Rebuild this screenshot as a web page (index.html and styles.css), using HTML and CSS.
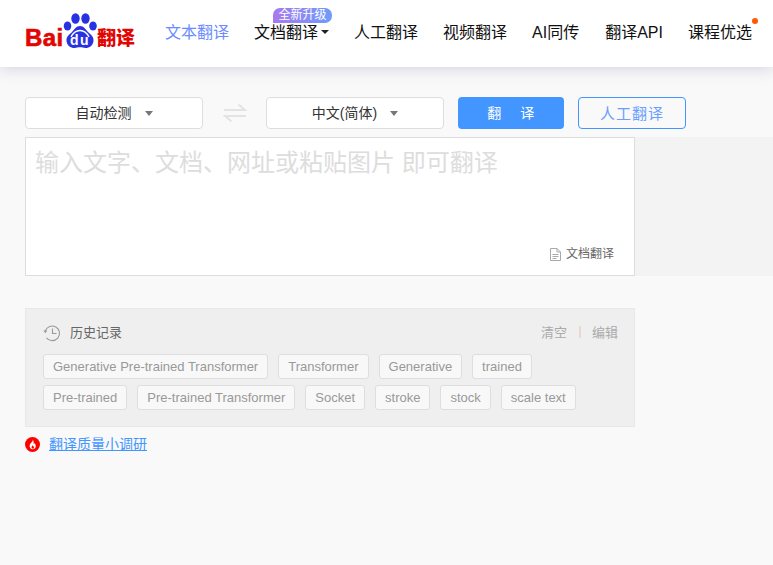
FILE: index.html
```html
<!DOCTYPE html>
<html lang="zh">
<head>
<meta charset="utf-8">
<title>百度翻译</title>
<link rel="stylesheet" href="styles.css">
</head>
<body>
<header class="header">
  <div class="logo">
    <span class="logo-bai">Bai</span>
    <span class="paw">
      <svg class="paw-svg" width="34" height="36" viewBox="0 0 34 36">
        <ellipse cx="4.5" cy="13" rx="3.800" ry="4.600" fill="#2932e1"/>
        <ellipse cx="12.5" cy="5.5" rx="4.200" ry="5.200" fill="#2932e1"/>
        <ellipse cx="22.5" cy="5.5" rx="4.200" ry="5.200" fill="#2932e1"/>
        <ellipse cx="30" cy="13" rx="3.800" ry="4.600" fill="#2932e1"/>
        <path d="M17 13c-4 0-5.500 3.500-8 6-2.500 2.500-6 4.500-5.500 9 .5 4.500 4 7 8 7 2 0 3.500-.7 5.500-.7s3.500.7 5.500.7c4 0 7.500-2.500 8-7 .5-4.500-3-6.500-5.500-9-2.500-2.500-4-6-8-6z" fill="#2932e1"/>
        <path d="M8 24c1.500-3 4.500-6.500 9-6.500s7.500 3.500 9 6.500" fill="none" stroke="#fff" stroke-width="1.300"/>
      </svg>
      <span class="paw-du">du</span>
    </span>
    <span class="logo-cn">翻译</span>
  </div>
  <nav class="nav">
    <a class="nav-item nav-active">文本翻译</a>
    <a class="nav-item nav-doc">文档翻译<i class="caret"></i><span class="badge">全新升级</span></a>
    <a class="nav-item">人工翻译</a>
    <a class="nav-item">视频翻译</a>
    <a class="nav-item nav-ai">AI同传</a>
    <a class="nav-item">翻译API</a>
    <a class="nav-item nav-course">课程优选<i class="dot"></i></a>
  </nav>
</header>

<main class="main">
  <div class="toolbar">
    <div class="select select-from"><span>自动检测</span><i class="select-caret"></i></div>
    <div class="swap">
      <svg width="24" height="20" viewBox="0 0 24 20" fill="none" stroke="#e3e3e3" stroke-width="2">
        <path d="M1 7h21L15.500 1.500"/>
        <path d="M23 13H2l6.500 5.500"/>
      </svg>
    </div>
    <div class="select select-to"><span>中文(简体)</span><i class="select-caret"></i></div>
    <button class="btn btn-primary">翻　译</button>
    <button class="btn btn-outline">人工翻译</button>
  </div>

  <section class="workspace">
    <div class="input-box">
      <div class="placeholder">输入文字、文档、网址或粘贴图片 即可翻译</div>
      <div class="doc-link">
        <svg width="11" height="13" viewBox="0 0 11 13" fill="none" stroke="#a9a9a9">
          <path d="M.5.500h6.500l3.500 3.500v8.500h-10z"/>
          <path d="M7 .5v3.500h3.500M2.500 6.500h6M2.500 8.500h6M2.500 10.500h4"/>
        </svg>
        <span>文档翻译</span>
      </div>
    </div>
    <div class="output-box"></div>
  </section>

  <section class="history">
    <div class="history-head">
      <div class="history-title">
        <svg width="18" height="18" viewBox="0 0 18 18" fill="none" stroke="#9a9a9a" stroke-width="1.100">
          <path d="M2.300 7A7.300 7.300 0 1 1 3.500 13.800"/>
          <path d="M9.500 4.500V9.500H13.500"/>
          <path d="M.3 6.500h4L2.300 9.200z" fill="#9a9a9a" stroke="none"/>
        </svg>
        <span class="history-label">历史记录</span>
      </div>
      <div class="history-actions">
        <a>清空</a><i class="sep"></i><a>编辑</a>
      </div>
    </div>
    <div class="tags">
      <span class="tag">Generative Pre-trained Transformer</span>
      <span class="tag">Transformer</span>
      <span class="tag">Generative</span>
      <span class="tag">trained</span>
      <span class="tag">Pre-trained</span>
      <span class="tag">Pre-trained Transformer</span>
      <span class="tag">Socket</span>
      <span class="tag">stroke</span>
      <span class="tag">stock</span>
      <span class="tag">scale text</span>
    </div>
  </section>

  <div class="survey">
    <svg width="15" height="15" viewBox="0 0 15 15">
      <circle cx="7.500" cy="7.500" r="7.500" fill="#f00"/>
      <path d="M7.800 2.500c.4 2-2.300 3.300-3 5.300-.7 2.400 1 4.500 2.900 4.500s3.400-1.700 3-3.900c-.2-1.200-.8-1.900-1.200-2.500-.1.700-.4 1.100-.8 1.300.1-1.900-.2-3.600-.9-4.700z" fill="#fff"/>
      <path d="M7.500 8c.2.900-1.100 1.300-1 2.500.1.800.7 1.200 1.300 1.200s1.200-.5 1.200-1.300c0-1-1-1.400-1.500-2.400z" fill="#f00"/>
    </svg>
    <a class="survey-link">翻译质量小调研</a>
  </div>
</main>
</body>
</html>
```

FILE: styles.css
```css
* { box-sizing: border-box; }

html, body {
  margin: 0;
  height: 100%;
}

body {
  background: #f9f9f9;
  font-family: "Liberation Sans", "Noto Sans CJK SC", sans-serif;
  color: #333;
  overflow: hidden;
}

/* header */
.header {
  height: 67px;
  background: #fff;
  box-shadow: 0 2px 14px rgba(90, 90, 160, 0.24);
  display: flex;
  align-items: flex-start;
  padding-left: 25px;
  position: relative;
}

.logo {
  width: 140px;
  height: 67px;
  display: flex;
  align-items: flex-start;
  flex: none;
}

.logo-bai {
  font: bold 24px/24px "Liberation Sans", sans-serif;
  color: #e10601;
  -webkit-text-stroke: 0.6px #e10601;
  margin-top: 26px;
  letter-spacing: 0.4px;
  width: 38px;
}

.paw {
  position: relative;
  width: 34px;
  height: 36px;
  margin-top: 13px;
  flex: none;
}

.paw-svg { display: block; }

.paw-du {
  position: absolute;
  left: 0;
  right: 0;
  top: 19px;
  text-align: center;
  font: bold 14px/16px "Liberation Sans", sans-serif;
  letter-spacing: 1.5px;
  color: #fff;
}

.logo-cn {
  font: 900 19px/20px "Noto Sans CJK SC", sans-serif;
  color: #e10601;
  margin-top: 27px;
  white-space: nowrap;
}

.nav {
  display: flex;
  gap: 25px;
  padding-top: 21px;
}

.nav-item {
  position: relative;
  display: block;
  font-size: 16px;
  line-height: 24px;
  color: #111;
  white-space: nowrap;
}

.nav-active { color: #6b8cff; }

.nav-doc { margin-right: 11px; }

.nav-ai { padding-right: 1px; }

.caret {
  position: absolute;
  right: -11px;
  top: 9px;
  border: 4px solid transparent;
  border-top-color: #222;
  border-bottom-width: 0;
}

.badge {
  position: absolute;
  left: 19px;
  top: -13px;
  width: 59px;
  height: 15px;
  border-radius: 7px 7px 7px 0;
  background: linear-gradient(90deg, #a879ee, #6d9cf9);
  color: #fff;
  font-size: 12px;
  line-height: 15px;
  text-align: center;
}

.dot {
  position: absolute;
  right: -6px;
  top: -3px;
  width: 6px;
  height: 6px;
  border-radius: 50%;
  background: #ff5a00;
}

/* main */
.main {
  padding-top: 30px;
}

.toolbar {
  display: flex;
  align-items: center;
  padding-left: 25px;
}

.select {
  height: 32px;
  width: 178px;
  background: #fff;
  border: 1px solid #dedede;
  border-radius: 4px;
  display: flex;
  align-items: center;
  justify-content: center;
  gap: 13px;
  padding-bottom: 2px;
  font-size: 14px;
  color: #333;
}

.select-caret {
  border: 4px solid transparent;
  border-top: 5px solid #777;
  border-bottom-width: 0;
  margin-top: 2px;
}

.swap {
  width: 63px;
  display: flex;
  justify-content: center;
}

.swap svg { display: block; }

.btn {
  height: 32px;
  border-radius: 4px;
  font-family: inherit;
  font-size: 14px;
  padding: 0 0 2px;
}

.btn-primary {
  width: 106px;
  margin-left: 14px;
  padding-left: 2px;
  background: #4395ff;
  border: 0;
  color: #fff;
  letter-spacing: 2.5px;
}

.btn-outline {
  width: 108px;
  margin-left: 14px;
  background: transparent;
  border: 1px solid #4395ff;
  color: #6b9fff;
  font-size: 15px;
  letter-spacing: 1px;
}

.workspace {
  display: flex;
  margin-top: 8px;
  padding-left: 25px;
  height: 139px;
}

.input-box {
  width: 610px;
  background: #fff;
  border: 1px solid #ddd;
  padding: 10px 9px 0;
  position: relative;
}

.placeholder {
  font-size: 24px;
  line-height: 30px;
  color: #ddd;
}

.doc-link {
  position: absolute;
  right: 20px;
  bottom: 12px;
  display: flex;
  align-items: center;
  gap: 5px;
  font-size: 12px;
  line-height: 18px;
  color: #666;
}

.output-box {
  flex: 1;
  background: #f3f3f3;
}

.history {
  width: 610px;
  height: 119px;
  margin: 32px 0 0 25px;
  background: #efefef;
  border: 1px solid #e8e8e8;
  padding: 15px 16px 0 17px;
}

.history-head {
  display: flex;
  justify-content: space-between;
  align-items: center;
  height: 18px;
}

.history-title {
  display: flex;
  align-items: center;
  gap: 9px;
  font-size: 13px;
  color: #666;
}

.history-label { padding-bottom: 3px; }

.history-actions {
  display: flex;
  align-items: center;
  padding-bottom: 3px;
  font-size: 13px;
  color: #aaa;
}

.sep {
  width: 2px;
  height: 12px;
  background: #ecd8d3;
  margin: 0 11px 0 12px;
}

.tags {
  display: flex;
  flex-wrap: wrap;
  gap: 6px 10px;
  margin-top: 12px;
}

.tag {
  height: 25px;
  padding: 0 9px;
  background: #f8f8f8;
  border: 1px solid #dedede;
  border-radius: 3px;
  font-size: 13px;
  line-height: 23px;
  color: #999;
  white-space: nowrap;
}

.survey {
  display: flex;
  align-items: center;
  gap: 9px;
  margin: 8px 0 0 25px;
  height: 18px;
}

.survey svg { display: block; }

.survey-link {
  font-size: 14px;
  line-height: 18px;
  color: #4395ff;
  text-decoration: underline;
}
```
